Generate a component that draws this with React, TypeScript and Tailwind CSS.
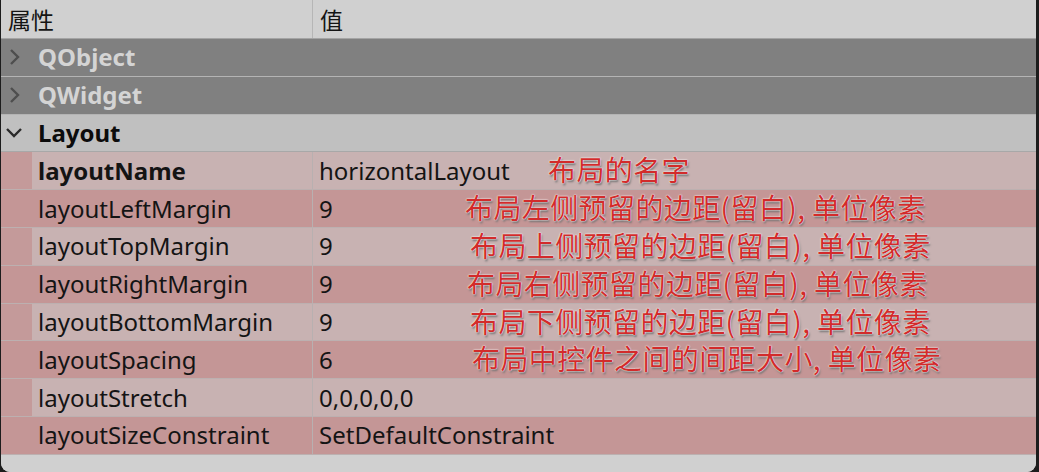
import React from "react";

type Prop = { name: string; value: string; bold?: boolean; note?: string; noteX?: number };

const props: Prop[] = [
  { name: "layoutName", value: "horizontalLayout", bold: true, note: "布局的名字", noteX: 547 },
  { name: "layoutLeftMargin", value: "9", note: "布局左侧预留的边距(留白), 单位像素", noteX: 464 },
  { name: "layoutTopMargin", value: "9", note: "布局上侧预留的边距(留白), 单位像素", noteX: 469 },
  { name: "layoutRightMargin", value: "9", note: "布局右侧预留的边距(留白), 单位像素", noteX: 466 },
  { name: "layoutBottomMargin", value: "9", note: "布局下侧预留的边距(留白), 单位像素", noteX: 469 },
  { name: "layoutSpacing", value: "6", note: "布局中控件之间的间距大小, 单位像素", noteX: 471 },
  { name: "layoutStretch", value: "0,0,0,0,0" },
  { name: "layoutSizeConstraint", value: "SetDefaultConstraint" },
];

function ChevronRight() {
  return (
    <svg width="16" height="20" viewBox="0 0 16 20" className="block">
      <path d="M4 3 L11 10 L4 17" fill="none" stroke="#4e4e4e" strokeWidth="2.4" />
    </svg>
  );
}

function ChevronDown() {
  return (
    <svg width="20" height="16" viewBox="0 0 20 16" className="block">
      <path d="M3 4 L10 11 L17 4" fill="none" stroke="#2a2a2a" strokeWidth="2.4" />
    </svg>
  );
}

export default function App() {
  return (
    <div className="w-[1039px] h-[472px] bg-[#1c1c1c] overflow-hidden font-['Noto_Sans','Noto_Sans_CJK_SC',sans-serif] text-[24px] text-[#141414]">
      <div className="h-full ml-[1px] mr-[3px] rounded-b-[9px] bg-[#d0d0d0] overflow-hidden flex flex-col">
        {/* header */}
        <div className="flex h-[39px] shrink-0 border-b border-[#a4a4a4] bg-[#d0d0d0] text-[23px]">
          <div className="w-[312px] flex items-center pl-[7px] border-r border-[#b6b6b6] font-['Noto_Sans_CJK_SC',sans-serif]">属性</div>
          <div className="flex-1 flex items-center pl-[7px] font-['Noto_Sans_CJK_SC',sans-serif]">值</div>
        </div>
        {/* QObject */}
        <div className="flex items-center h-[37.8px] shrink-0 bg-[#808080] border-b border-[#b4b4b4]">
          <div className="w-[37px] pl-[6px]"><ChevronRight /></div>
          <span className="font-bold text-[#d4d4d4]">QObject</span>
        </div>
        <div className="flex items-center h-[37.8px] shrink-0 bg-[#808080] border-b border-[#b4b4b4]">
          <div className="w-[37px] pl-[6px]"><ChevronRight /></div>
          <span className="font-bold text-[#d4d4d4]">QWidget</span>
        </div>
        <div className="flex items-center h-[37.8px] shrink-0 bg-[#c0c0c0] border-b border-[#a8a8a8]">
          <div className="w-[37px] pl-[3px]"><ChevronDown /></div>
          <span className="font-bold text-[#0c0c0c]">Layout</span>
        </div>
        {props.map((p, i) => {
          const odd = i % 2 === 0;
          return (
            <div
              key={p.name}
              className={`relative flex h-[37.8px] shrink-0 border-b border-[#bcb0b0] ${odd ? "bg-[#c8b2b2]" : "bg-[#c49696]"}`}
            >
              <div className={`w-[31px] ${odd ? "bg-[#c49a9a]" : "bg-[#c49696]"}`} />
              <div className={`w-[281px] flex items-center pl-[6px] border-r border-[#b8b0b0] ${p.bold ? "font-bold" : ""}`}>
                {p.name}
              </div>
              <div className="flex-1 flex items-center pl-[6px]">{p.value}</div>
              {p.note && (
                <div
                  className="absolute top-[-2px] h-[38px] flex items-center whitespace-nowrap font-['Noto_Sans_CJK_SC',sans-serif] text-[28px] tracking-[0.4px] text-[#d22b2b] [text-shadow:0_0_1px_#ffffff,0_0_2px_#ffffff,1px_2px_2px_#6e6e6e]"
                  style={{ left: p.noteX }}
                >
                  {p.note}
                </div>
              )}
            </div>
          );
        })}
        <div className="flex-1 bg-[#d0d0d0]" />
      </div>
    </div>
  );
}
